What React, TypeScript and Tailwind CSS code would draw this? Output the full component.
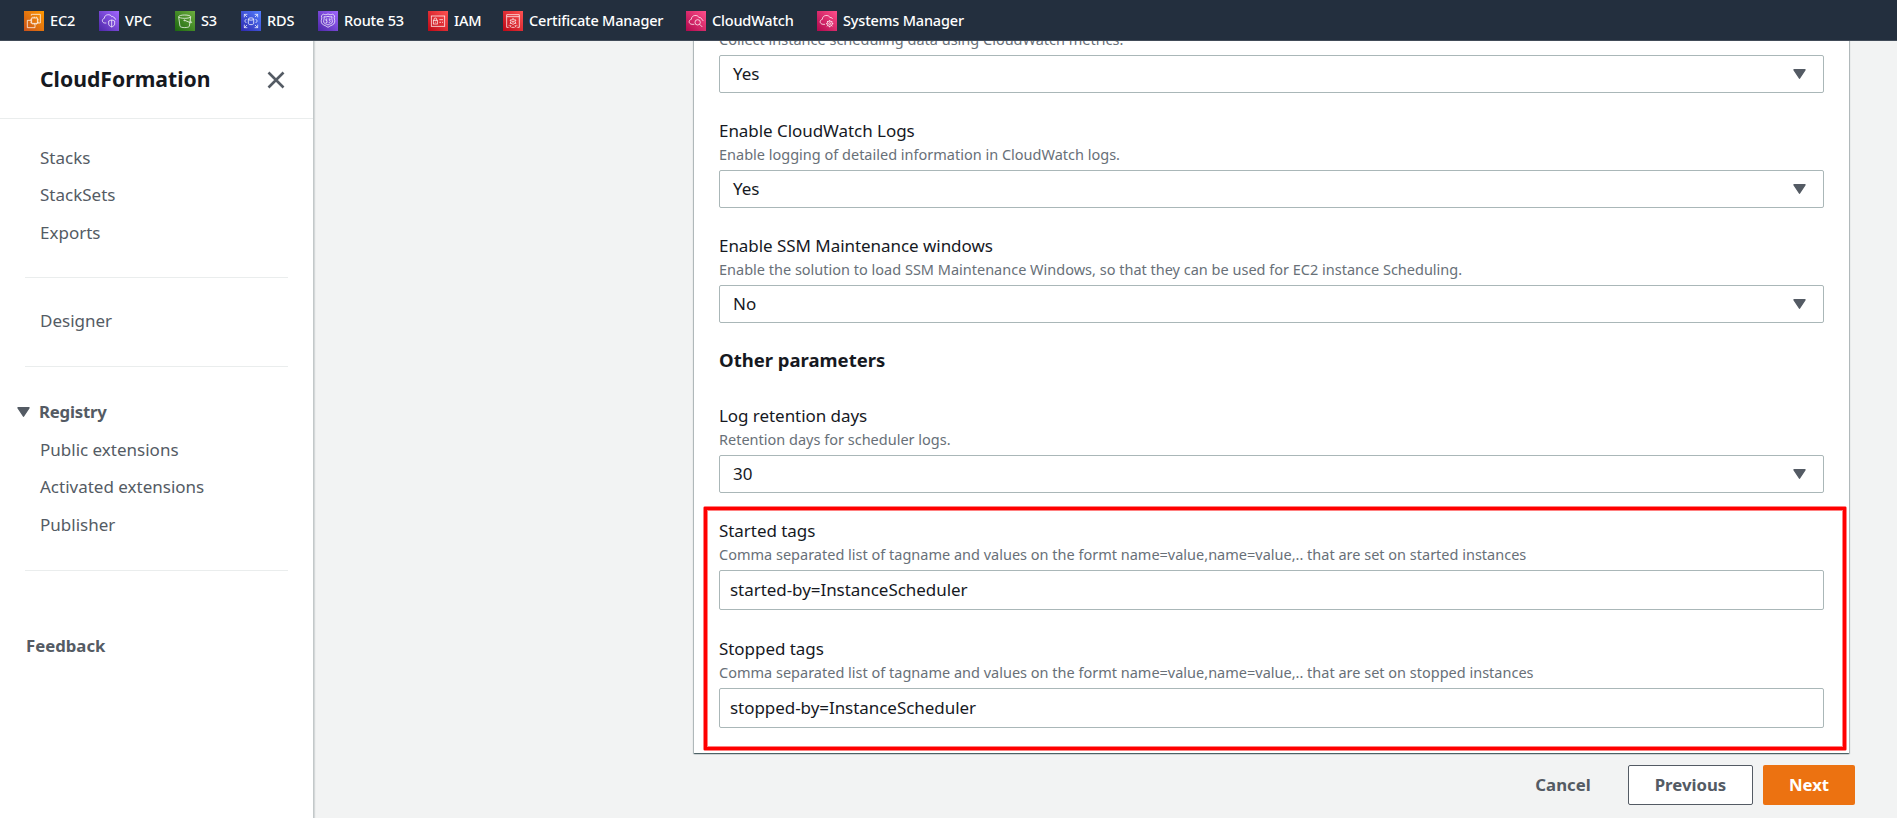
import type { ReactNode } from "react";

type Service = { name: string; width: string; from: string; to: string; glyph: ReactNode };

const services: Service[] = [
  {
    name: "EC2",
    width: "w-[75px]",
    from: "#c8511b",
    to: "#ff9900",
    glyph: (
      <>
        <path d="M22 14v-4h27v26h-9" />
        <path d="M21 28H10v22h23V39" />
        <rect x="23" y="21" width="17" height="16" />
        <path d="M27 17v4M32 17v4M37 17v4M27 37v4M32 37v4M37 37v4M19 25h4M19 30h4M19 35h4M40 25h4M40 30h4M40 35h4" />
      </>
    ),
  },
  {
    name: "VPC",
    width: "w-[76px]",
    from: "#4d27a8",
    to: "#a166ff",
    glyph: (
      <>
        <path d="M22 36h-5c-9-1-9-12-1-14 0-13 19-14 22-5 4-2 7 1 7 4 3 0 5 2 5 5" />
        <path d="M29 30c4-2 6-2 9-3 3 1 6 1 9 3v9c0 4-4 7-9 9-5-2-9-5-9-9zM38 27v21" />
      </>
    ),
  },
  {
    name: "S3",
    width: "w-[66px]",
    from: "#1b660f",
    to: "#6cae3e",
    glyph: (
      <>
        <ellipse cx="29" cy="17" rx="18" ry="5" />
        <path d="M11 18l4 28c3 5 25 5 28 0l4-28" />
        <path d="M29 28l17 7c6 1 5-3-1-5" />
        <circle cx="28" cy="28" r="1.5" />
      </>
    ),
  },
  {
    name: "RDS",
    width: "w-[77px]",
    from: "#2e27ad",
    to: "#527fff",
    glyph: (
      <>
        <path d="M10 19v-9h9M10 10l8 8M41 10h9v9M50 10l-8 8M10 41v9h9M10 50l8-8M41 50h9v-9M50 50l-8-8" />
        <ellipse cx="30" cy="24" rx="8" ry="3.5" />
        <path d="M22 24v14c2 4 14 4 16 0V24" />
        <path d="M16 24l-5 6 5 6M44 24l5 6-5 6" />
      </>
    ),
  },
  {
    name: "Route 53",
    width: "w-[110px]",
    from: "#4d27a8",
    to: "#a166ff",
    glyph: (
      <>
        <path d="M10 15l6-6c5 3 9 2 14 0 5 2 9 3 14 0l6 6c-4 8 2 11 0 19-2 9-12 8-20 15-8-7-18-6-20-15-2-8 4-11 0-19z" />
        <path d="M18 17c4 1 8 1 12-1 4 2 8 2 12 1-2 8 2 11 1 16-1 6-8 5-13 9-5-4-12-3-13-9-1-5 3-8 1-16z" />
        <path d="M28 24h-4v5h3v6h-4M32 24h5M37 24l-3 4c4 0 4 7-2 7" />
      </>
    ),
  },
  {
    name: "IAM",
    width: "w-[75px]",
    from: "#bd0816",
    to: "#ff5252",
    glyph: (
      <>
        <rect x="10" y="15" width="40" height="31" />
        <rect x="16" y="28" width="12" height="11" />
        <path d="M18 28v-4c0-4 8-4 8 0v4M22 32v3M34 26h11M34 34h5M42 34h3" />
      </>
    ),
  },
  {
    name: "Certificate Manager",
    width: "w-[183px]",
    from: "#bd0816",
    to: "#ff5252",
    glyph: (
      <>
        <path d="M17 49h-6V11h38v38h-6M11 17h38" />
        <path d="M30 22l3 5 6 0-3 5 3 5-6 0-3 4-3-4-6 0 3-5-3-5 6 0z" />
        <circle cx="30" cy="32" r="2" />
        <path d="M24 42l-3 7M36 42l3 7M17 43h3M25 49h10M40 43h3" />
      </>
    ),
  },
  {
    name: "CloudWatch",
    width: "w-[131px]",
    from: "#b0084d",
    to: "#ff4f8b",
    glyph: (
      <>
        <path d="M25 40h-7c-11-1-11-13-2-15 0-14 20-15 23-5 4-2 7 1 7 4 3 1 5 3 5 6" />
        <circle cx="35" cy="34" r="8" />
        <path d="M41 40l8 8" />
      </>
    ),
  },
  {
    name: "Systems Manager",
    width: "w-[160px]",
    from: "#b0084d",
    to: "#ff4f8b",
    glyph: (
      <>
        <path d="M24 40h-6c-11-1-11-13-2-15 0-14 20-15 23-5 4-2 7 1 7 4" />
        <circle cx="38" cy="38" r="3" />
        <circle cx="38" cy="38" r="8" />
        <path d="M38 27v4M38 45v4M27 38h4M45 38h4M30 30l3 3M43 43l3 3M46 30l-3 3M33 43l-3 3" />
      </>
    ),
  },
];

function ServiceIcon({ service, id }: { service: Service; id: string }) {
  return (
    <svg className="size-5 shrink-0" viewBox="0 0 60 60" aria-hidden="true">
      <defs>
        <linearGradient id={id} x1="0" y1="1" x2="1" y2="0">
          <stop offset="0" stopColor={service.from} />
          <stop offset="1" stopColor={service.to} />
        </linearGradient>
      </defs>
      <rect width="60" height="60" fill={`url(#${id})`} />
      <g fill="none" stroke="#fff" strokeOpacity="0.85" strokeWidth="2.6">
        {service.glyph}
      </g>
    </svg>
  );
}

function TopBar() {
  return (
    <header className="z-10 flex h-[41px] shrink-0 items-start border-b border-[#414b58] bg-[#232f3e] pt-[11px] pl-6">
      {services.map((s, i) => (
        <a key={s.name} className={`flex shrink-0 gap-[6px] ${s.width}`}>
          <ServiceIcon service={s} id={`service-${i}`} />
          <span className="text-[14.5px] leading-[19px] font-medium tracking-[-0.18px] whitespace-nowrap text-white">
            {s.name}
          </span>
        </a>
      ))}
    </header>
  );
}

function Caret({ className }: { className?: string }) {
  return (
    <svg className={className} width="13" height="10" viewBox="0 0 13 10" aria-hidden="true">
      <path d="M1 .8h11L6.5 9.2z" fill="#545b64" stroke="#545b64" strokeWidth="1.4" strokeLinejoin="round" />
    </svg>
  );
}

function Divider() {
  return <hr className="mr-[25px] ml-[25px] border-t border-[#eaeded]" />;
}

function SideLink({ children }: { children: ReactNode }) {
  return <a className="block h-[37.4px] pl-10 text-[17px] leading-[28px] text-[#545b64]">{children}</a>;
}

function Sidebar() {
  return (
    <aside className="flex w-[314px] shrink-0 flex-col border-r border-[#c3c8c9] bg-white shadow-[1px_0_1px_0_rgba(0,28,36,0.12)]">
      <div className="flex h-[78px] shrink-0 items-start justify-between border-b border-[#eaeded] pr-[28px] pl-10">
        <h1 className="pt-[23px] text-[21.2px] leading-[30px] font-bold text-[#16191f]">CloudFormation</h1>
        <svg className="mt-[30px]" width="18" height="18" viewBox="0 0 18 18" aria-label="Close">
          <path d="M1.5 1.5l15 15M16.5 1.5l-15 15" stroke="#545b64" strokeWidth="2.6" />
        </svg>
      </div>
      <nav className="flex flex-col">
        <div className="h-[158px] pt-[25px]">
          <SideLink>Stacks</SideLink>
          <SideLink>StackSets</SideLink>
          <SideLink>Exports</SideLink>
        </div>
        <Divider />
        <div className="h-[88px] pt-[29px]">
          <SideLink>Designer</SideLink>
        </div>
        <Divider />
        <div className="h-[203px] pt-[30px]">
          <div className="flex h-[39px] items-start pl-[17px]">
            <Caret className="mt-[10px] shrink-0" />
            <span className="pl-[9px] text-[16.75px] leading-[29px] font-bold tracking-[-0.2px] text-[#545b64]">
              Registry
            </span>
          </div>
          <SideLink>Public extensions</SideLink>
          <SideLink>Activated extensions</SideLink>
          <SideLink>Publisher</SideLink>
        </div>
        <Divider />
        <a className="mt-[61px] pl-[26px] text-[16.75px] leading-[28px] font-bold text-[#545b64]">Feedback</a>
      </nav>
    </aside>
  );
}

function Field({ label, hint, children }: { label?: string; hint: string; children: ReactNode }) {
  return (
    <div className="flex flex-col">
      {label && <label className="text-[17px] leading-[28px] tracking-[-0.05px] text-[#16191f]">{label}</label>}
      <p className="mb-[7px] text-[14.5px] leading-[18px] text-[#687078]">{hint}</p>
      {children}
    </div>
  );
}

function SelectBox({ value }: { value: string }) {
  return (
    <div className="flex h-[38px] items-center justify-between rounded-[2px] border border-[#aab7b8] bg-white pr-[17px] pl-[13px]">
      <span className="text-[17px] leading-[26px] text-[#16191f]">{value}</span>
      <Caret />
    </div>
  );
}

function TextBox({ value }: { value: string }) {
  return (
    <div className="flex h-[40px] items-center rounded-[2px] border border-[#aab7b8] bg-white pl-[10px]">
      <span className="text-[17px] leading-[26px] tracking-[-0.05px] text-[#16191f]">{value}</span>
    </div>
  );
}

function Highlight() {
  return (
    <div className="pointer-events-none absolute -top-[11px] -right-[23px] -bottom-[23px] -left-[16px] rounded-[2px] border border-[#ff8080]">
      <div className="h-full border-[3px] border-[#ff0000]">
        <div className="h-full border border-[#ff8080]" />
      </div>
    </div>
  );
}

export default function App() {
  return (
    <div className="flex h-screen flex-col overflow-hidden bg-[#f2f3f3] font-['Noto_Sans',sans-serif]">
      <TopBar />
      <div className="flex min-h-0 flex-1">
        <Sidebar />
        <main className="flex min-w-0 flex-1 flex-col overflow-hidden pr-[48px] pl-[380px]">
          <section className="-mt-[11px] flex shrink-0 flex-col gap-6 bg-white pr-[25px] pb-[25px] pl-[25px] shadow-[0_1px_1px_0_rgba(0,28,36,0.5),1px_1px_1px_0_rgba(0,28,36,0.2),-1px_1px_1px_0_rgba(0,28,36,0.2)]">
            <Field hint="Collect instance scheduling data using CloudWatch metrics.">
              <SelectBox value="Yes" />
            </Field>
            <Field label="Enable CloudWatch Logs" hint="Enable logging of detailed information in CloudWatch logs.">
              <SelectBox value="Yes" />
            </Field>
            <Field
              label="Enable SSM Maintenance windows"
              hint="Enable the solution to load SSM Maintenance Windows, so that they can be used for EC2 instance Scheduling."
            >
              <SelectBox value="No" />
            </Field>
            <h2 className="mb-[5px] text-[18.5px] leading-[26px] font-bold text-[#16191f]">Other parameters</h2>
            <Field label="Log retention days" hint="Retention days for scheduler logs.">
              <SelectBox value="30" />
            </Field>
            <div className="relative flex flex-col gap-[25px]">
              <Field
                label="Started tags"
                hint="Comma separated list of tagname and values on the formt name=value,name=value,.. that are set on started instances"
              >
                <TextBox value="started-by=InstanceScheduler" />
              </Field>
              <Field
                label="Stopped tags"
                hint="Comma separated list of tagname and values on the formt name=value,name=value,.. that are set on stopped instances"
              >
                <TextBox value="stopped-by=InstanceScheduler" />
              </Field>
              <Highlight />
            </div>
          </section>
          <div className="-mr-[6px] flex shrink-0 justify-end gap-[10px] pt-3 text-[16.75px] font-bold text-[#545b64]">
            <button className="h-10 w-[110px]">Cancel</button>
            <button className="h-10 w-[125px] rounded-[2px] border border-[#545b64] bg-white">Previous</button>
            <button className="h-10 w-[92px] rounded-[2px] bg-[#ec7211] text-white">Next</button>
          </div>
        </main>
      </div>
    </div>
  );
}
